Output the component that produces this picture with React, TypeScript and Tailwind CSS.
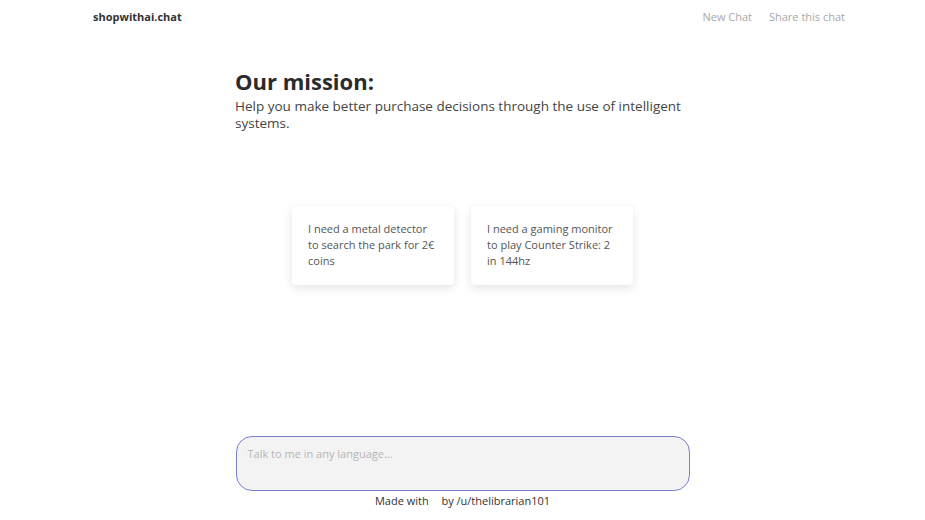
import React, { useState } from 'react';

const suggestions = [
  'I need a metal detector to search the park for 2€ coins',
  'I need a gaming monitor to play Counter Strike: 2 in 144hz',
];

const App: React.FC = () => {
  const [text, setText] = useState('');

  return (
    <div className="h-[520px] w-full bg-white text-[#333] font-['Open_Sans',sans-serif] flex flex-col">
      <header className="flex items-center justify-between h-[35px] pl-[93px] pr-[80px]">
        <span className="text-[11px] font-bold text-[#333]">shopwithai.chat</span>
        <nav className="flex items-center gap-[17px] text-[11px] text-[#a8a8a8]">
          <button>New Chat</button>
          <button>Share this chat</button>
        </nav>
      </header>

      <section className="w-[455px] mx-auto mt-[31px]">
        <h1 className="text-[22px] leading-[30px] font-bold text-[#2b2b2b]">Our mission:</h1>
        <p className="mt-[2px] text-[13.5px] leading-[17px] text-[#444]">
          Help you make better purchase decisions through the use of intelligent systems.
        </p>
      </section>

      <div className="flex justify-center gap-[17px] mt-[74px]">
        {suggestions.map((s) => (
          <button
            key={s}
            onClick={() => setText(s)}
            className="w-[162px] h-[79px] flex flex-col justify-start text-left rounded-[4px] bg-white px-[16px] pt-[15px] text-[11px] leading-[16px] text-[#555] shadow-[0_3px_10px_rgba(0,0,0,0.11)]"
          >
            {s}
          </button>
        ))}
      </div>

      <div className="w-[454px] mx-auto mt-[151px]">
        <textarea
          value={text}
          onChange={(e) => setText(e.target.value)}
          placeholder="Talk to me in any language..."
          className="block w-full h-[55px] resize-none rounded-[16px] border-[1.5px] border-[#7b82cc] bg-[#f3f3f3] px-[11px] pt-[9px] text-[11px] leading-[16px] text-[#333] placeholder:text-[#b5b5b5] outline-none"
        />
        <p className="mt-[2px] text-center text-[11px] leading-[16px] text-[#333]">
          Made with <span className="inline-block w-[7px]" /> by /u/thelibrarian101
        </p>
      </div>
    </div>
  );
};

export default App;
